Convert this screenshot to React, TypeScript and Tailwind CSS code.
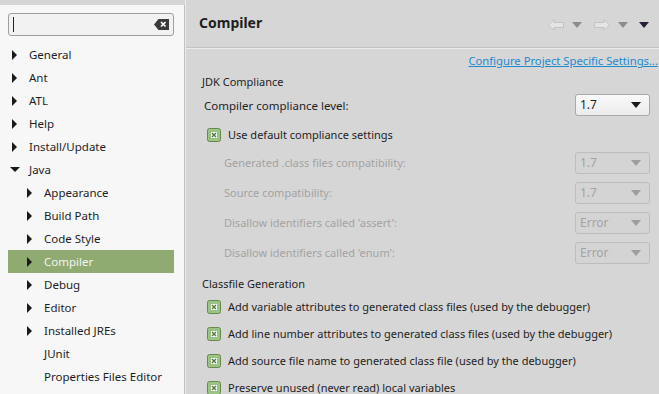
import React from 'react';

const FONT = { fontFamily: '"Noto Sans", "Open Sans", sans-serif' };

type Node = { label: string; level: number; arrow: 'right' | 'down' | null; selected?: boolean };

const TREE: Node[] = [
  { label: 'General', level: 0, arrow: 'right' },
  { label: 'Ant', level: 0, arrow: 'right' },
  { label: 'ATL', level: 0, arrow: 'right' },
  { label: 'Help', level: 0, arrow: 'right' },
  { label: 'Install/Update', level: 0, arrow: 'right' },
  { label: 'Java', level: 0, arrow: 'down' },
  { label: 'Appearance', level: 1, arrow: 'right' },
  { label: 'Build Path', level: 1, arrow: 'right' },
  { label: 'Code Style', level: 1, arrow: 'right' },
  { label: 'Compiler', level: 1, arrow: 'right', selected: true },
  { label: 'Debug', level: 1, arrow: 'right' },
  { label: 'Editor', level: 1, arrow: 'right' },
  { label: 'Installed JREs', level: 1, arrow: 'right' },
  { label: 'JUnit', level: 1, arrow: null },
  { label: 'Properties Files Editor', level: 1, arrow: null },
];

const DISABLED_ROWS = [
  { label: 'Generated .class files compatibility:', value: '1.7' },
  { label: 'Source compatibility:', value: '1.7' },
  { label: "Disallow identifiers called 'assert':", value: 'Error' },
  { label: "Disallow identifiers called 'enum':", value: 'Error' },
];

const CLASSFILE_OPTIONS = [
  'Add variable attributes to generated class files (used by the debugger)',
  'Add line number attributes to generated class files (used by the debugger)',
  'Add source file name to generated class file (used by the debugger)',
  'Preserve unused (never read) local variables',
];

const Arrow = ({ dir }: { dir: 'right' | 'down' }) =>
  dir === 'right' ? (
    <svg width="6" height="10" viewBox="0 0 6 10">
      <path d="M0 0 L5 5 L0 10 Z" fill="#1a1a1a" />
    </svg>
  ) : (
    <svg width="10" height="6" viewBox="0 0 10 6">
      <path d="M0 0 L10 0 L5 5 Z" fill="#1a1a1a" />
    </svg>
  );

const Tri = ({ color }: { color: string }) => (
  <svg width="10" height="6" viewBox="0 0 10 6">
    <path d="M0 0 L10 0 L5 6 Z" fill={color} />
  </svg>
);

const CheckBox = () => (
  <svg width="14" height="14" viewBox="0 0 14 14" className="shrink-0">
    <rect x="0.5" y="0.5" width="13" height="13" rx="2" fill="#9cc483" stroke="#65894f" />
    <rect x="3.5" y="3.5" width="7" height="7" fill="#ffffff" stroke="#7ea86a" strokeWidth="0.6" />
    <path d="M5 5 L9 9 M9 5 L5 9" stroke="#4e7a3a" strokeWidth="1.4" />
  </svg>
);

const Combo = ({ value, disabled }: { value: string; disabled?: boolean }) => (
  <div
    className={`w-[75px] h-[22px] shrink-0 rounded-[3px] border flex items-center justify-between pl-[4px] pr-[8px] text-[12px] ${
      disabled
        ? 'border-[#bdbdbd] bg-[#d4d4d4] text-[#a3a3a3]'
        : 'border-[#a9a9a9] bg-gradient-to-b from-[#fafafa] to-[#ececec] text-[#1e1e1e]'
    }`}
  >
    <span>{value}</span>
    <Tri color={disabled ? '#9d9d9d' : '#1a1a1a'} />
  </div>
);

const App: React.FC = () => {
  return (
    <div className="w-[659px] h-[394px] overflow-hidden bg-[#d6d6d6] flex" style={FONT}>
      {/* Left: filter + tree */}
      <div className="w-[185px] shrink-0 mt-[5px] bg-[#f7f7f7] border-r border-[#bfbfbf] flex flex-col pl-[8px] pr-[10px]">
        <div className="mt-[8px] h-[23px] rounded-[3px] border border-[#9e9e9e] bg-[#f2f2f2] flex items-center justify-between pl-[4px] pr-[4px]">
          <div className="w-px h-[15px] bg-[#222]" />
          <svg width="15" height="11" viewBox="0 0 15 11">
            <path d="M0 5.5 L4.5 0 L15 0 L15 11 L4.5 11 Z" fill="#3a3a3a" />
            <path d="M7 3 L11.5 7.5 M11.5 3 L7 7.5" stroke="#ffffff" strokeWidth="1.7" />
          </svg>
        </div>
        <div className="mt-[7px] flex flex-col">
          {TREE.map((n) => (
            <div
              key={n.label}
              className={`h-[23px] flex items-center text-[11.5px] ${
                n.selected ? 'bg-[#8fab72] text-[#f4f4f4]' : 'text-[#1e1e1e]'
              }`}
            >
              <div className={`w-[21px] flex items-center ${n.level === 1 ? 'ml-[15px]' : ''} ${n.arrow === 'down' ? 'pl-[2px]' : 'pl-[4px]'}`}>
                {n.arrow && <Arrow dir={n.arrow} />}
              </div>
              <span>{n.label}</span>
            </div>
          ))}
        </div>
      </div>

      {/* Right: page */}
      <div className="flex-1 min-w-0 flex flex-col border-l border-[#ececec]">
        <div className="h-[48px] shrink-0 flex items-center justify-between pl-[13px] pr-[10px] border-b border-[#c4c4c4]">
          <span className="text-[14px] font-bold text-[#1e1e1e] -mt-[2px]">Compiler</span>
          <div className="flex items-center gap-[8px] mt-[2px]">
            <svg width="16" height="12" viewBox="0 0 16 12">
              <path d="M0.5 6 L6 0.5 L6 3.5 L15.5 3.5 L15.5 8.5 L6 8.5 L6 11.5 Z" fill="#e4e4e4" stroke="#c2c2c2" />
            </svg>
            <Tri color="#8c8c8c" />
            <svg width="16" height="12" viewBox="0 0 16 12" className="ml-[4px]">
              <path d="M15.5 6 L10 0.5 L10 3.5 L0.5 3.5 L0.5 8.5 L10 8.5 L10 11.5 Z" fill="#e4e4e4" stroke="#c2c2c2" />
            </svg>
            <Tri color="#8c8c8c" />
            <span className="ml-[3px]">
              <Tri color="#2a1d3c" />
            </span>
          </div>
        </div>
        <div className="border-t border-[#ececec]" />

        <div className="flex justify-end pr-[1px] mt-[4px]">
          <span className="text-[11.25px] text-[#1c8bd0] underline whitespace-nowrap">Configure Project Specific Settings...</span>
        </div>

        <div className="pl-[16px] pr-[9px] mt-[2px] text-[11px] text-[#1e1e1e]">
          <div className="h-[20px] flex items-center">JDK Compliance</div>
          <div className="mt-[2px] h-[23px] flex items-center justify-between pl-[2px]">
            <span className="text-[11.5px]">Compiler compliance level:</span>
            <Combo value="1.7" />
          </div>
          <div className="mt-[8px] h-[20px] flex items-center gap-[7px] pl-[5px]">
            <CheckBox />
            <span>Use default compliance settings</span>
          </div>
          <div className="mt-[7px] flex flex-col gap-[7px]">
            {DISABLED_ROWS.map((r) => (
              <div key={r.label} className="h-[23px] flex items-center justify-between pl-[22px]">
                <span className="text-[#a3a3a3]">{r.label}</span>
                <Combo value={r.value} disabled />
              </div>
            ))}
          </div>
          <div className="mt-[9px] h-[20px] flex items-center">Classfile Generation</div>
          <div className="mt-[3px] flex flex-col gap-[7px]">
            {CLASSFILE_OPTIONS.map((o) => (
              <div key={o} className="h-[20px] flex items-center gap-[7px] pl-[5px] whitespace-nowrap">
                <CheckBox />
                <span>{o}</span>
              </div>
            ))}
          </div>
        </div>
      </div>
    </div>
  );
};

export default App;
